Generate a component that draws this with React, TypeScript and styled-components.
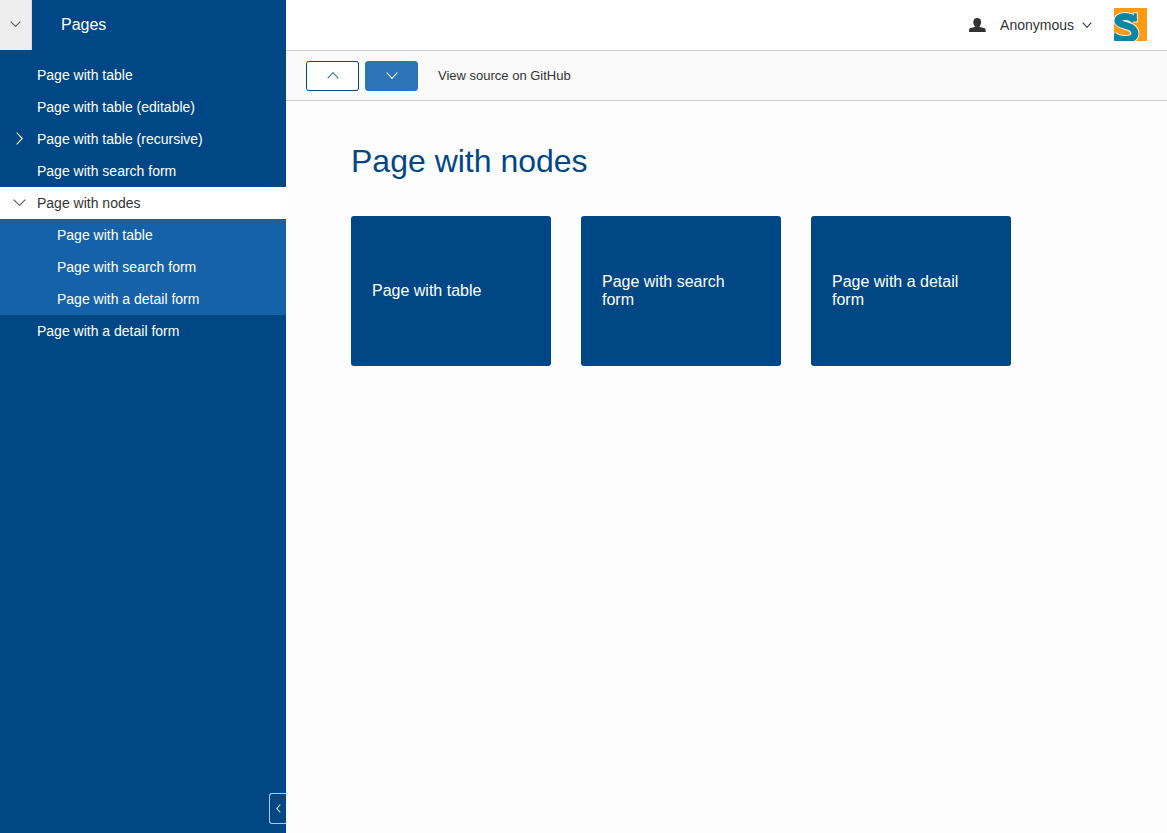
import React from "react";
import styled, { createGlobalStyle, css } from "styled-components";

const GlobalStyle = createGlobalStyle`
  * { box-sizing: border-box; }
  body { margin: 0; font-family: "Liberation Sans", Arial, sans-serif; font-size: 14px; color: #333; }
  button { font: inherit; padding: 0; margin: 0; cursor: pointer; }
`;

const Desktop = styled.div`
  display: flex;
  height: 100vh;
  overflow: hidden;
  background: #fdfdfd;
`;

const Navigation = styled.nav`
  position: relative;
  flex: 0 0 286px;
  display: flex;
  flex-direction: column;
  background: #014786;
  color: #fff;
`;

const NavigationHeader = styled.div`
  display: flex;
  align-items: center;
  height: 50px;
  margin-bottom: 9px;
`;

const ViewMenuButton = styled.button`
  display: flex;
  align-items: center;
  justify-content: center;
  width: 32px;
  height: 50px;
  padding-bottom: 2px;
  border: 0;
  border-right: 1px solid #d9dde1;
  background: #eee;
`;

const OutlineTitle = styled.div`
  margin-left: 29px;
  font-size: 16px;
  line-height: 18px;
  padding-bottom: 1px;
`;

const MenuItem = styled.div<{ $state?: "selected" | "child" }>`
  display: flex;
  align-items: center;
  height: 32px;
  padding-left: ${(p) => (p.$state === "child" ? 20 : 0)}px;
  ${(p) => p.$state === "selected" && css`background: #fff; color: #333;`}
  ${(p) => p.$state === "child" && css`background: #1562a9;`}
`;

const Toggle = styled.span`
  display: flex;
  align-items: center;
  justify-content: center;
  width: 37px;
  padding-left: 2px;
  padding-bottom: 2px;
`;

const CollapseHandle = styled.button`
  position: absolute;
  right: 0;
  bottom: 9px;
  display: flex;
  align-items: center;
  justify-content: center;
  width: 17px;
  height: 31px;
  border: 1px solid #b3c8db;
  border-right: 0;
  border-radius: 3px 0 0 3px;
  background: transparent;
`;

const Bench = styled.div`
  flex: 1;
  display: flex;
  flex-direction: column;
`;

const Header = styled.header`
  display: flex;
  align-items: center;
  justify-content: flex-end;
  height: 51px;
  padding: 0 20px 1px 0;
  border-bottom: 1px solid #ccc;
  background: #fff;
`;

const UserMenu = styled.div`
  display: flex;
  align-items: center;
  margin-right: 22px;
`;

const UserName = styled.span`
  margin: 0 8px 0 14px;
`;

const Toolbar = styled.div`
  display: flex;
  align-items: center;
  gap: 6px;
  height: 50px;
  padding-left: 20px;
  border-bottom: 1px solid #ccc;
  background: #fafafa;
`;

const ToolButton = styled.button<{ $primary?: boolean }>`
  display: flex;
  align-items: center;
  justify-content: center;
  width: 53px;
  height: 30px;
  border: 1px solid ${(p) => (p.$primary ? "#2c74b5" : "#014786")};
  border-radius: 3px;
  background: ${(p) => (p.$primary ? "#2c74b5" : "#fff")};
`;

const SourceLink = styled.span`
  margin-left: 14px;
  font-size: 13px;
`;

const Content = styled.main`
  padding: 41px 65px;
`;

const Title = styled.h1`
  margin: 0 0 36px;
  color: #014786;
  font-size: 32px;
  font-weight: 400;
  line-height: 38px;
`;

const Tiles = styled.div`
  display: flex;
  gap: 30px;
`;

const Tile = styled.div`
  display: flex;
  align-items: center;
  width: 200px;
  height: 150px;
  padding: 0 21px;
  border-radius: 3px;
  background: #014786;
  color: #fff;
  font-size: 16px;
  line-height: 18px;
`;

type ChevronProps = { dir: "up" | "down" | "left" | "right"; w: number; h: number; color: string };

// Thin chevron whose points sit just inside its box.
const Chevron = ({ dir, w, h, color }: ChevronProps) => {
  const r = w - 0.7;
  const b = h - 0.7;
  const points = {
    down: `0.7,0.7 ${w / 2},${b} ${r},0.7`,
    up: `0.7,${b} ${w / 2},0.7 ${r},${b}`,
    left: `${r},0.7 0.7,${h / 2} ${r},${b}`,
    right: `0.7,0.7 ${r},${h / 2} 0.7,${b}`,
  }[dir];
  return (
    <svg width={w} height={h} fill="none" stroke={color} strokeWidth="1.1">
      <polyline points={points} />
    </svg>
  );
};

const PersonIcon = () => (
  <svg width="17" height="14" viewBox="0 0 17 14" fill="#333">
    <ellipse cx="8.200" cy="4.2" rx="3.900" ry="4.2" />
    <path d="M5.800 7h4.800v2l4.600 1.100q1.500.5 1.500 2v1.900H0v-1.900q0-1.500 1.500-2l4.300-1.100z" />
  </svg>
);

const swoosh =
  "M20.500 13C18.500 9.800 15.500 8.500 11.500 8.500C7 8.500 4 10 4 12.500C4 15.700 9 16.500 13.500 18C18.500 19.600 21 21.500 21 25.500C21 29.500 17 31.500 11 31.500C6 31.500 2 30 -1 27.500";

const Logo = () => (
  <svg width="33" height="33" viewBox="0 0 33 33" fill="none">
    <rect width="33" height="33" fill="#ff9a13" />
    <g stroke="#fff3e0">
      <path d={swoosh} strokeWidth="8.900" />
      <path d="M21.300 4.200V14.500" strokeWidth="4.800" />
    </g>
    <g stroke="#0b87a5">
      <path d={swoosh} strokeWidth="7" />
      <path d="M21.300 5.200V13.500" strokeWidth="3" />
    </g>
  </svg>
);

type Page = { label: string; state?: "selected" | "child"; toggle?: "down" | "right" };

const pages: Page[] = [
  { label: "Page with table" },
  { label: "Page with table (editable)" },
  { label: "Page with table (recursive)", toggle: "right" },
  { label: "Page with search form" },
  { label: "Page with nodes", state: "selected", toggle: "down" },
  { label: "Page with table", state: "child" },
  { label: "Page with search form", state: "child" },
  { label: "Page with a detail form", state: "child" },
  { label: "Page with a detail form" },
];

const tiles = pages.filter((p) => p.state === "child");

export default function App() {
  return (
    <>
      <GlobalStyle />
      <Desktop>
        <Navigation>
          <NavigationHeader>
            <ViewMenuButton aria-label="Views">
              <Chevron dir="down" w={11} h={6} color="#555" />
            </ViewMenuButton>
            <OutlineTitle>Pages</OutlineTitle>
          </NavigationHeader>
          {pages.map((page, i) => (
            <MenuItem key={i} $state={page.state}>
              <Toggle>
                {page.toggle === "right" && <Chevron dir="right" w={7} h={13} color="#fff" />}
                {page.toggle === "down" && <Chevron dir="down" w={13} h={7} color="#555" />}
              </Toggle>
              {page.label}
            </MenuItem>
          ))}
          <CollapseHandle aria-label="Collapse">
            <Chevron dir="left" w={5} h={9} color="#c6d6e4" />
          </CollapseHandle>
        </Navigation>
        <Bench>
          <Header>
            <UserMenu>
              <PersonIcon />
              <UserName>Anonymous</UserName>
              <Chevron dir="down" w={10} h={6} color="#333" />
            </UserMenu>
            <Logo />
          </Header>
          <Toolbar>
            <ToolButton aria-label="Up">
              <Chevron dir="up" w={12} h={7} color="#3a6c9b" />
            </ToolButton>
            <ToolButton $primary aria-label="Down">
              <Chevron dir="down" w={12} h={7} color="#fff" />
            </ToolButton>
            <SourceLink>View source on GitHub</SourceLink>
          </Toolbar>
          <Content>
            <Title>Page with nodes</Title>
            <Tiles>
              {tiles.map((t) => (
                <Tile key={t.label}>{t.label}</Tile>
              ))}
            </Tiles>
          </Content>
        </Bench>
      </Desktop>
    </>
  );
}
